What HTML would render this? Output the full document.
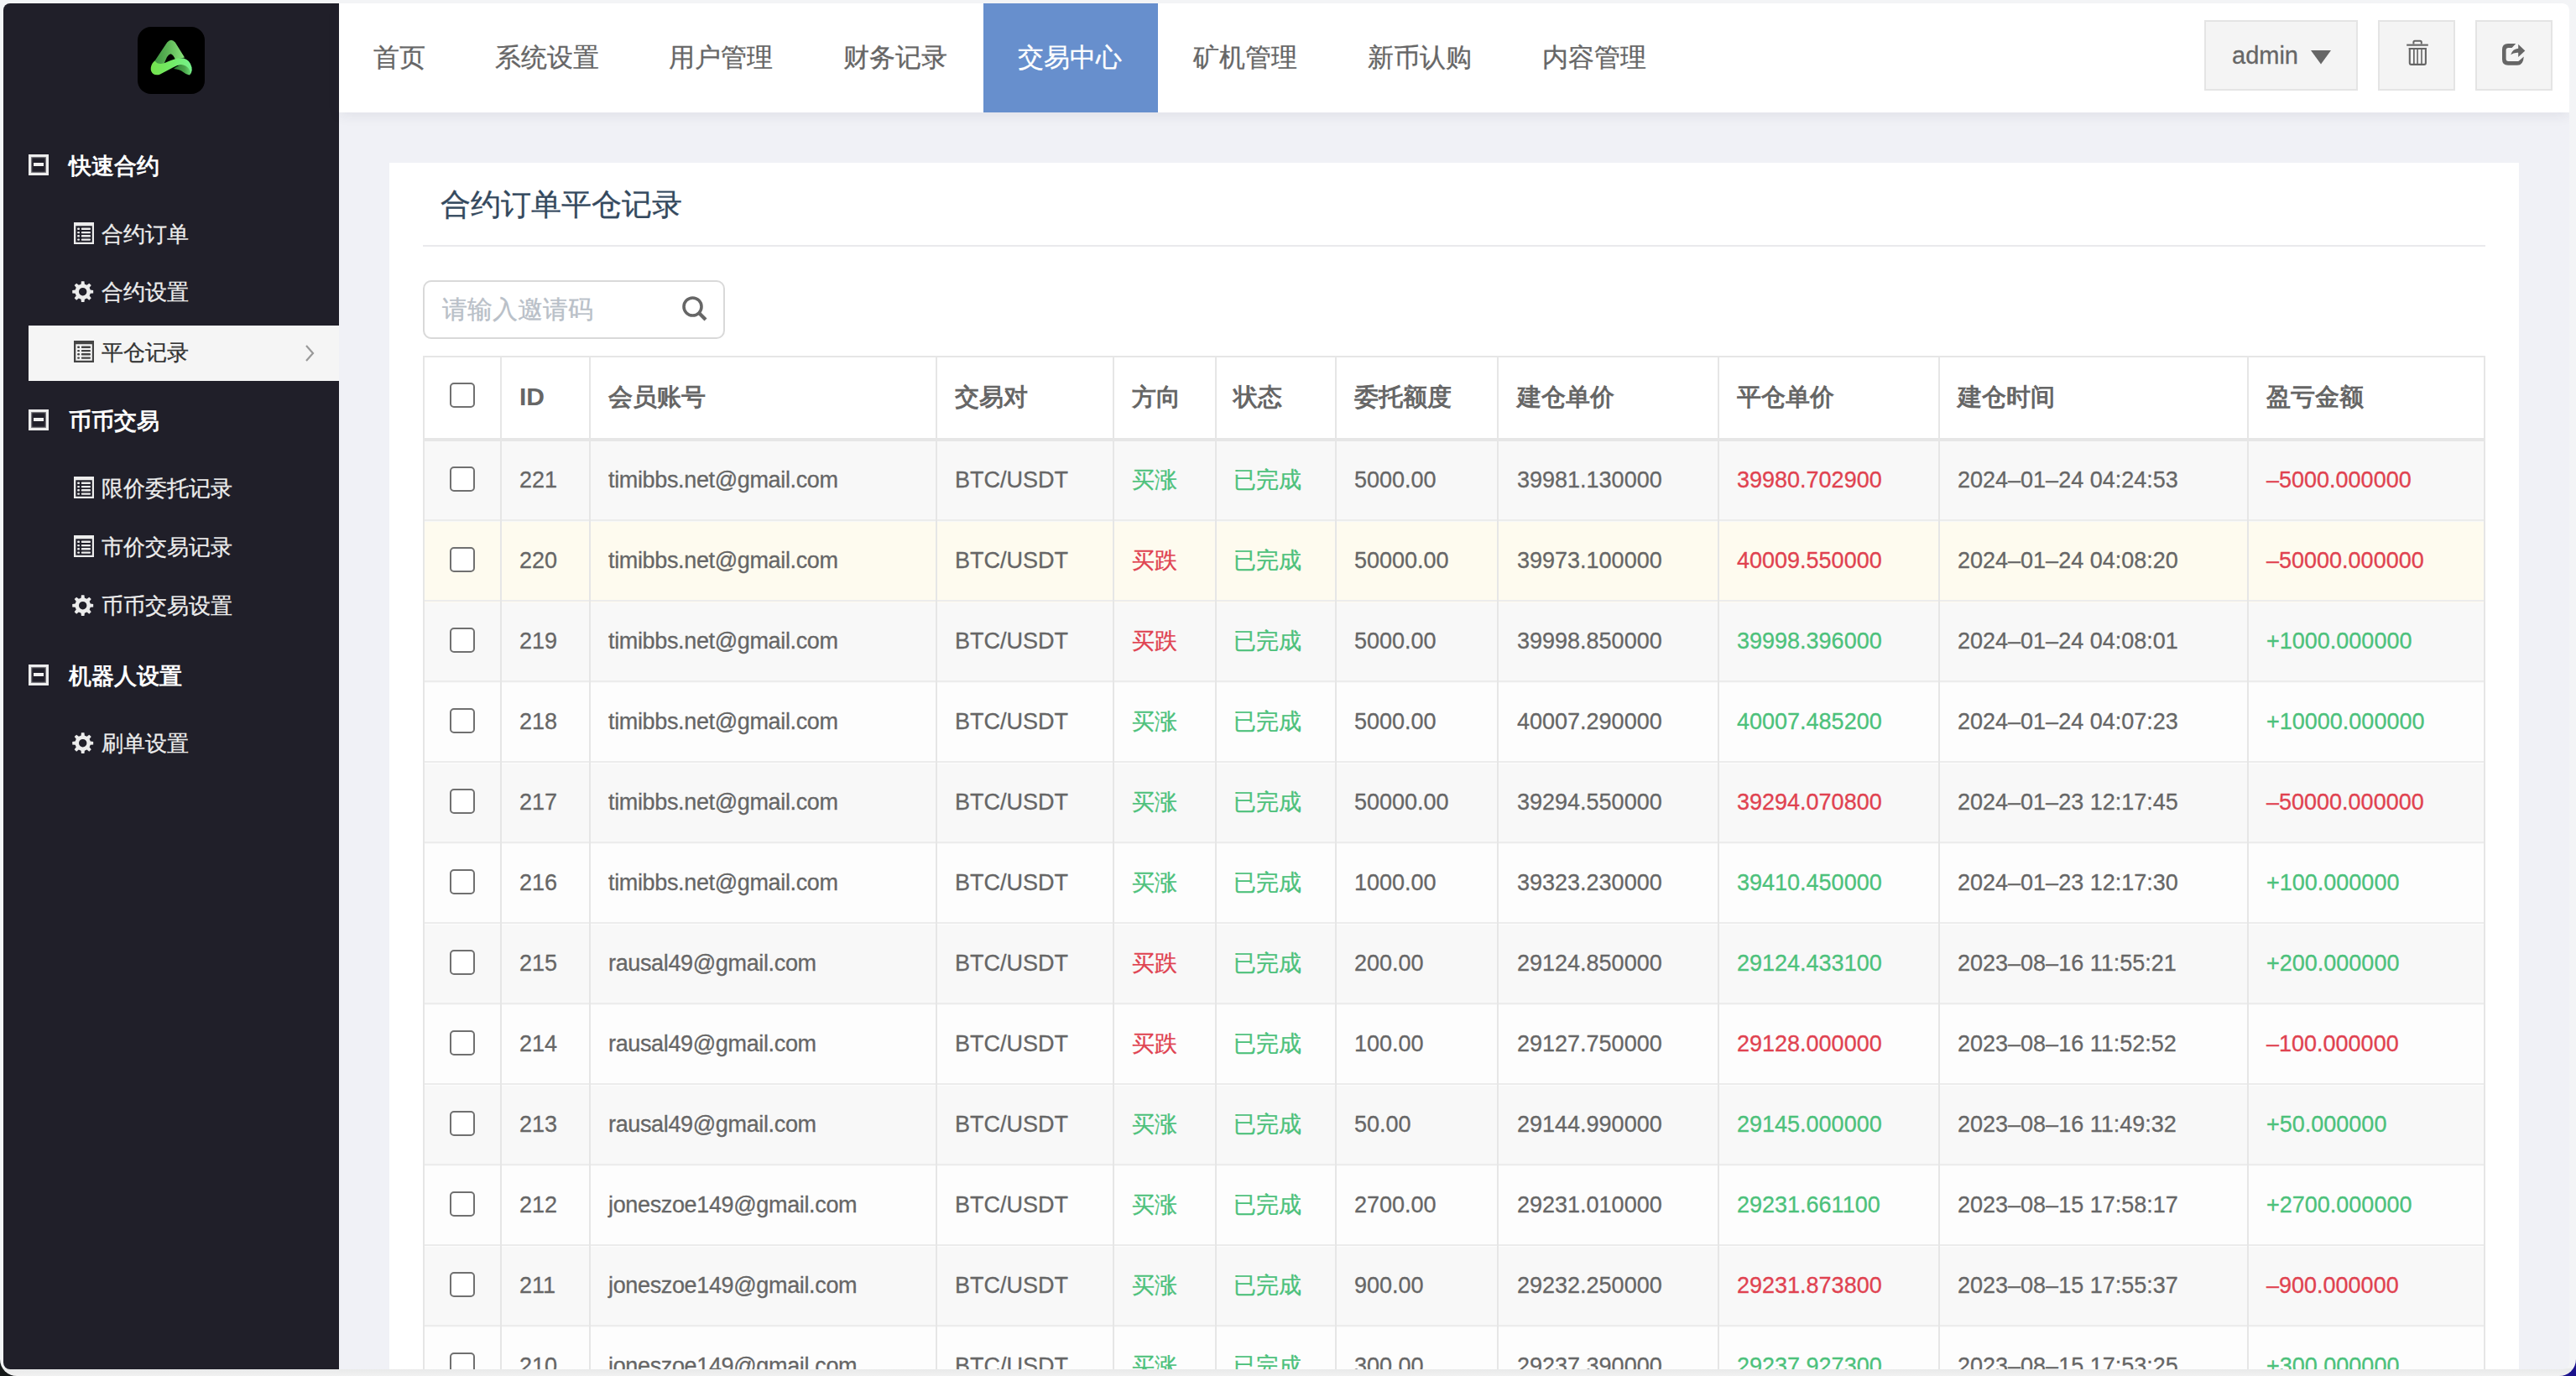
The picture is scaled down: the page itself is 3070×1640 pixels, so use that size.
<!DOCTYPE html><html><head><meta charset="utf-8"><title>平仓记录</title><style>
*{margin:0;padding:0;box-sizing:border-box}
html,body{width:3070px;height:1640px;overflow:hidden;background:linear-gradient(to right,#151919 50%,#1b128c 50%)}
body{font-family:"Liberation Sans",sans-serif;position:relative;-webkit-text-stroke:0.3px currentColor}
.abs{position:absolute}
#frame{position:absolute;left:0;top:0;width:3070px;height:1640px;background:linear-gradient(to bottom,#f3f4f6 0,#f3f4f6 1630px,#e9eaea 1632px,#f1f1f1 1640px);border-radius:0 0 20px 20px}
#win{position:absolute;left:4px;top:4px;width:3058px;height:1628px;border-radius:8px;overflow:hidden;background:#f0f1f6}
#side{position:absolute;left:0;top:0;width:400px;height:1628px;background:#201f29}
#logo{position:absolute;left:160px;top:28px;width:80px;height:80px;border-radius:16px;background:#000}
.sh{position:absolute;left:77.5px;font-size:26.6px;font-weight:bold;color:#fff;line-height:40px;height:40px;white-space:nowrap;-webkit-text-stroke:0}
.shi{position:absolute;left:30px;width:24px;height:24.5px;border:3px solid #ededed;box-shadow:inset 0 0 1.5px 1px rgba(235,235,235,.55)}
.shi:after{content:"";position:absolute;left:3px;top:7px;width:12px;height:4px;background:#f0f0f0}
.si{position:absolute;left:117px;font-size:26px;color:#ececec;line-height:40px;height:40px;white-space:nowrap}
.act{position:absolute;left:30px;top:384px;width:370px;height:66px;background:#f5f5f5}
#nav{position:absolute;left:400px;top:0;width:2658px;height:130px;background:#fff;box-shadow:0 4px 14px rgba(40,40,70,.075)}
.tab{position:absolute;top:0;height:130px;line-height:130px;font-size:31px;color:#666;white-space:nowrap}
#acttab{position:absolute;left:768px;top:0;width:208px;height:130px;background:#678fcd}
.btn{position:absolute;top:20px;height:84px;background:#f4f4f4;border:2px solid #e4e4e4}
#card{position:absolute;left:460px;top:190px;width:2538px;height:1500px;background:#fff}
.t{position:absolute;white-space:nowrap;font-size:27px;color:#666;line-height:40px;height:40px}
.h{position:absolute;white-space:nowrap;font-size:30px;font-weight:bold;color:#666;line-height:40px;height:40px;-webkit-text-stroke:0}
.vl{position:absolute;width:2px;background:#e6e6e6}
.hl{position:absolute;height:2px;background:#e6e6e6}
.cb{position:absolute;width:30px;height:30px;border:2px solid #707070;border-radius:5px;background:#fff}
.r{color:#e04250}.g{color:#4cc17b}
</style></head><body>
<div id="frame"></div>
<div id="win">
<div id="side">
<div id="logo"><svg width="80" height="80" viewBox="0 0 80 80"><defs><linearGradient id="g1" x1="20" y1="0" x2="56" y2="0" gradientUnits="userSpaceOnUse"><stop offset="0" stop-color="#3d9440"/><stop offset=".45" stop-color="#5cb556"/><stop offset="1" stop-color="#8ae47c"/></linearGradient><linearGradient id="g2" x1="15" y1="0" x2="65" y2="0" gradientUnits="userSpaceOnUse"><stop offset="0" stop-color="#74e24c"/><stop offset=".5" stop-color="#72ea66"/><stop offset="1" stop-color="#76f28c"/></linearGradient><linearGradient id="g3" x1="44" y1="0" x2="64" y2="0" gradientUnits="userSpaceOnUse"><stop offset="0" stop-color="#2e7f34"/><stop offset=".6" stop-color="#4aa64a"/><stop offset="1" stop-color="#6fdc78"/></linearGradient></defs><path d="M19.5 42 L35.2 18.6 Q40 12.8 44.8 18.6 L56 36.6 L45 39 Q42.5 33 40 32.4 Q37.5 32 35 36 L30.5 46 L24 46 Z" fill="url(#g1)"/><path d="M43 50 Q50 44.5 56 45.2 Q62 46.5 64.4 50.5 Q64.6 56 61.5 57.6 Q58 57 54 53.8 Q50 50.5 43 50 Z" fill="url(#g3)"/><path d="M20.5 40.5 Q23 44 27.5 44 Q31 44 37 41 Q48 36 55 37.6 Q62.5 39.5 64.6 48.5 Q65 52 63.5 55.5 Q61.5 47.5 54.5 45.6 Q49 44.5 42 48.6 Q33 53.5 27 56.4 Q22 58.3 18.5 56 Q15.2 53 15.8 48.5 Q16.8 43 20.5 40.5 Z" fill="url(#g2)"/></svg></div>
<div class="shi" style="top:180px"></div>
<div class="sh" style="top:174px">快速合约</div>
<svg width="24" height="26" viewBox="0 0 24 26" class="abs" style="left:84px;top:261px"><path fill="#ececec" fill-rule="evenodd" d="M0 0H24V26H0Z M2.3 4.2V23.7H21.8V4.2Z"/><g fill="#ececec"><rect x="4.1" y="6.6" width="2.9" height="2.4" rx="1"/><rect x="8.8" y="6.6" width="11.2" height="2.4" rx="1"/><rect x="4.1" y="10.9" width="2.9" height="2.4" rx="1"/><rect x="8.8" y="10.9" width="11.2" height="2.4" rx="1"/><rect x="4.1" y="15.1" width="2.9" height="2.4" rx="1"/><rect x="8.8" y="15.1" width="11.2" height="2.4" rx="1"/><rect x="4.1" y="19.4" width="2.9" height="2.4" rx="1"/><rect x="8.8" y="19.4" width="11.2" height="2.4" rx="1"/></g></svg>
<div class="si" style="top:255px;">合约订单</div>
<svg width="25.4" height="25.4" viewBox="0 0 25.4 25.4" class="abs" style="left:82.3px;top:331.1px"><path fill="#ececec" fill-rule="evenodd" d="M10.53 3.66L10.95 0.22L14.45 0.22L14.87 3.66L17.56 4.77L20.28 2.64L22.76 5.12L20.63 7.84L21.74 10.53L25.18 10.95L25.18 14.45L21.74 14.87L20.63 17.56L22.76 20.28L20.28 22.76L17.56 20.63L14.87 21.74L14.45 25.18L10.95 25.18L10.53 21.74L7.84 20.63L5.12 22.76L2.64 20.28L4.77 17.56L3.66 14.87L0.22 14.45L0.22 10.95L3.66 10.53L4.77 7.84L2.64 5.12L5.12 2.64L7.84 4.77ZM8.0 12.70a4.7 4.7 0 1 0 9.4 0a4.7 4.7 0 1 0 -9.4 0Z"/></svg>
<div class="si" style="top:324px;">合约设置</div>
<div class="act"></div>
<svg width="24" height="26" viewBox="0 0 24 26" class="abs" style="left:84px;top:402px"><path fill="#444" fill-rule="evenodd" d="M0 0H24V26H0Z M2.3 4.2V23.7H21.8V4.2Z"/><g fill="#444"><rect x="4.1" y="6.6" width="2.9" height="2.4" rx="1"/><rect x="8.8" y="6.6" width="11.2" height="2.4" rx="1"/><rect x="4.1" y="10.9" width="2.9" height="2.4" rx="1"/><rect x="8.8" y="10.9" width="11.2" height="2.4" rx="1"/><rect x="4.1" y="15.1" width="2.9" height="2.4" rx="1"/><rect x="8.8" y="15.1" width="11.2" height="2.4" rx="1"/><rect x="4.1" y="19.4" width="2.9" height="2.4" rx="1"/><rect x="8.8" y="19.4" width="11.2" height="2.4" rx="1"/></g></svg>
<div class="si" style="top:396px;color:#333">平仓记录</div>
<svg class="abs" style="left:358px;top:406px" width="14" height="22" viewBox="0 0 14 22"><path d="M3 2 L11 11 L3 20" fill="none" stroke="#999" stroke-width="2.2"/></svg>
<div class="shi" style="top:484px"></div>
<div class="sh" style="top:478px">币币交易</div>
<svg width="24" height="26" viewBox="0 0 24 26" class="abs" style="left:84px;top:564px"><path fill="#ececec" fill-rule="evenodd" d="M0 0H24V26H0Z M2.3 4.2V23.7H21.8V4.2Z"/><g fill="#ececec"><rect x="4.1" y="6.6" width="2.9" height="2.4" rx="1"/><rect x="8.8" y="6.6" width="11.2" height="2.4" rx="1"/><rect x="4.1" y="10.9" width="2.9" height="2.4" rx="1"/><rect x="8.8" y="10.9" width="11.2" height="2.4" rx="1"/><rect x="4.1" y="15.1" width="2.9" height="2.4" rx="1"/><rect x="8.8" y="15.1" width="11.2" height="2.4" rx="1"/><rect x="4.1" y="19.4" width="2.9" height="2.4" rx="1"/><rect x="8.8" y="19.4" width="11.2" height="2.4" rx="1"/></g></svg>
<div class="si" style="top:558px;">限价委托记录</div>
<svg width="24" height="26" viewBox="0 0 24 26" class="abs" style="left:84px;top:634px"><path fill="#ececec" fill-rule="evenodd" d="M0 0H24V26H0Z M2.3 4.2V23.7H21.8V4.2Z"/><g fill="#ececec"><rect x="4.1" y="6.6" width="2.9" height="2.4" rx="1"/><rect x="8.8" y="6.6" width="11.2" height="2.4" rx="1"/><rect x="4.1" y="10.9" width="2.9" height="2.4" rx="1"/><rect x="8.8" y="10.9" width="11.2" height="2.4" rx="1"/><rect x="4.1" y="15.1" width="2.9" height="2.4" rx="1"/><rect x="8.8" y="15.1" width="11.2" height="2.4" rx="1"/><rect x="4.1" y="19.4" width="2.9" height="2.4" rx="1"/><rect x="8.8" y="19.4" width="11.2" height="2.4" rx="1"/></g></svg>
<div class="si" style="top:628px;">市价交易记录</div>
<svg width="25.4" height="25.4" viewBox="0 0 25.4 25.4" class="abs" style="left:82.3px;top:705.1px"><path fill="#ececec" fill-rule="evenodd" d="M10.53 3.66L10.95 0.22L14.45 0.22L14.87 3.66L17.56 4.77L20.28 2.64L22.76 5.12L20.63 7.84L21.74 10.53L25.18 10.95L25.18 14.45L21.74 14.87L20.63 17.56L22.76 20.28L20.28 22.76L17.56 20.63L14.87 21.74L14.45 25.18L10.95 25.18L10.53 21.74L7.84 20.63L5.12 22.76L2.64 20.28L4.77 17.56L3.66 14.87L0.22 14.45L0.22 10.95L3.66 10.53L4.77 7.84L2.64 5.12L5.12 2.64L7.84 4.77ZM8.0 12.70a4.7 4.7 0 1 0 9.4 0a4.7 4.7 0 1 0 -9.4 0Z"/></svg>
<div class="si" style="top:698px;">币币交易设置</div>
<div class="shi" style="top:788px"></div>
<div class="sh" style="top:782px">机器人设置</div>
<svg width="25.4" height="25.4" viewBox="0 0 25.4 25.4" class="abs" style="left:82.3px;top:869.1px"><path fill="#ececec" fill-rule="evenodd" d="M10.53 3.66L10.95 0.22L14.45 0.22L14.87 3.66L17.56 4.77L20.28 2.64L22.76 5.12L20.63 7.84L21.74 10.53L25.18 10.95L25.18 14.45L21.74 14.87L20.63 17.56L22.76 20.28L20.28 22.76L17.56 20.63L14.87 21.74L14.45 25.18L10.95 25.18L10.53 21.74L7.84 20.63L5.12 22.76L2.64 20.28L4.77 17.56L3.66 14.87L0.22 14.45L0.22 10.95L3.66 10.53L4.77 7.84L2.64 5.12L5.12 2.64L7.84 4.77ZM8.0 12.70a4.7 4.7 0 1 0 9.4 0a4.7 4.7 0 1 0 -9.4 0Z"/></svg>
<div class="si" style="top:862px;">刷单设置</div>
</div>
<div id="nav">
<div id="acttab"></div>
<div class="tab" style="left:41px;">首页</div>
<div class="tab" style="left:186px;">系统设置</div>
<div class="tab" style="left:393px;">用户管理</div>
<div class="tab" style="left:601px;">财务记录</div>
<div class="tab" style="left:809px;color:#fff;">交易中心</div>
<div class="tab" style="left:1018px;">矿机管理</div>
<div class="tab" style="left:1226px;">新币认购</div>
<div class="tab" style="left:1434px;">内容管理</div>
<div class="btn" style="left:2223px;width:183px"></div>
<div class="abs" style="left:2256px;top:20px;height:84px;line-height:84px;font-size:29px;color:#666">admin</div>
<svg class="abs" style="left:2350px;top:56px" width="24" height="17" viewBox="0 0 24 17"><path d="M0 0 H24 L12 16.5 Z" fill="#666"/></svg>
<div class="btn" style="left:2430px;width:92px"></div>
<svg class="abs" style="left:2464px;top:43px" width="26" height="32" viewBox="0 0 26 32"><rect x="0.2" y="5.6" width="25.6" height="2.1" fill="#666"/><path d="M8.4 5.6 V3.2 Q8.4 1.7 9.9 1.7 H16.3 Q17.8 1.7 17.8 3.2 V5.6" fill="none" stroke="#666" stroke-width="2"/><path d="M3.8 10 V28 Q3.8 29.9 5.7 29.9 H20.9 Q22.9 29.9 22.9 28 V10" fill="none" stroke="#666" stroke-width="2.1"/><rect x="2.8" y="10" width="21.1" height="2" fill="#666"/><rect x="8" y="10" width="1.7" height="20" fill="#666"/><rect x="12.3" y="10" width="1.6" height="20" fill="#666"/><rect x="17.2" y="10" width="1.6" height="20" fill="#666"/></svg>
<div class="btn" style="left:2546px;width:92px"></div>
<svg class="abs" style="left:2576px;top:46px" width="32" height="30" viewBox="0 0 32 30"><path fill="#666" d="M18.3 2 L9 2 Q2 2 2 9 L2 20.8 Q2 27.8 9 27.8 L20 27.8 Q27.2 27.8 27.8 17.4 L22 22.4 Q21.4 22.9 20 22.9 L9.5 22.9 Q6.6 22.9 6.6 20 L6.6 9.8 Q6.6 6.9 9.5 6.9 L13.6 6.9 Z"/><path fill="#666" d="M21.2 2.8 L29.3 10.4 L21.2 18 L21.2 12.7 Q15.5 12.4 12.2 15.2 Q14.6 8.3 21.2 7.8 Z"/></svg>
</div>
<div id="card"></div>
<div class="abs" style="left:521px;top:216px;font-size:36px;color:#34495e;line-height:48px;white-space:nowrap">合约订单平仓记录</div>
<div class="hl" style="left:500px;top:288px;width:2458px;background:#e9e9ec"></div>
<div class="abs" style="left:500px;top:330px;width:360px;height:70px;border:2px solid #d9d9d9;border-radius:10px;background:#fff"></div>
<div class="abs" style="left:523px;top:345px;font-size:30px;color:#b9c0c8;line-height:40px;white-space:nowrap">请输入邀请码</div>
<svg class="abs" style="left:808px;top:348px" width="32" height="33" viewBox="0 0 32 33"><circle cx="13.5" cy="13.5" r="10.5" fill="none" stroke="#666" stroke-width="3.6"/><path d="M21 21 L29 29" stroke="#666" stroke-width="4.2" stroke-linecap="butt"/></svg>
<div class="abs" style="left:500px;top:420px;width:2458px;height:98px;background:#fff"></div>
<div class="abs" style="left:500px;top:522px;width:2458px;height:96px;background:#f8f8f8"></div>
<div class="abs" style="left:500px;top:618px;width:2458px;height:96px;background:#fefbef"></div>
<div class="abs" style="left:500px;top:714px;width:2458px;height:96px;background:#f8f8f8"></div>
<div class="abs" style="left:500px;top:810px;width:2458px;height:96px;background:#fdfdfd"></div>
<div class="abs" style="left:500px;top:906px;width:2458px;height:96px;background:#f8f8f8"></div>
<div class="abs" style="left:500px;top:1002px;width:2458px;height:96px;background:#fdfdfd"></div>
<div class="abs" style="left:500px;top:1098px;width:2458px;height:96px;background:#f8f8f8"></div>
<div class="abs" style="left:500px;top:1194px;width:2458px;height:96px;background:#fdfdfd"></div>
<div class="abs" style="left:500px;top:1290px;width:2458px;height:96px;background:#f8f8f8"></div>
<div class="abs" style="left:500px;top:1386px;width:2458px;height:96px;background:#fdfdfd"></div>
<div class="abs" style="left:500px;top:1482px;width:2458px;height:96px;background:#f8f8f8"></div>
<div class="abs" style="left:500px;top:1578px;width:2458px;height:96px;background:#fdfdfd"></div>
<div class="hl" style="left:500px;top:420px;width:2458px"></div>
<div class="hl" style="left:500px;top:518px;width:2458px;height:4px"></div>
<div class="hl" style="left:500px;top:615px;width:2458px;background:#ececec"></div>
<div class="hl" style="left:500px;top:711px;width:2458px;background:#ececec"></div>
<div class="hl" style="left:500px;top:807px;width:2458px;background:#ececec"></div>
<div class="hl" style="left:500px;top:903px;width:2458px;background:#ececec"></div>
<div class="hl" style="left:500px;top:999px;width:2458px;background:#ececec"></div>
<div class="hl" style="left:500px;top:1095px;width:2458px;background:#ececec"></div>
<div class="hl" style="left:500px;top:1191px;width:2458px;background:#ececec"></div>
<div class="hl" style="left:500px;top:1287px;width:2458px;background:#ececec"></div>
<div class="hl" style="left:500px;top:1383px;width:2458px;background:#ececec"></div>
<div class="hl" style="left:500px;top:1479px;width:2458px;background:#ececec"></div>
<div class="hl" style="left:500px;top:1575px;width:2458px;background:#ececec"></div>
<div class="hl" style="left:500px;top:1671px;width:2458px;background:#ececec"></div>
<div class="vl" style="left:500px;top:420px;height:1254px"></div>
<div class="vl" style="left:592px;top:420px;height:1254px"></div>
<div class="vl" style="left:698px;top:420px;height:1254px"></div>
<div class="vl" style="left:1111px;top:420px;height:1254px"></div>
<div class="vl" style="left:1322px;top:420px;height:1254px"></div>
<div class="vl" style="left:1444px;top:420px;height:1254px"></div>
<div class="vl" style="left:1587px;top:420px;height:1254px"></div>
<div class="vl" style="left:1780px;top:420px;height:1254px"></div>
<div class="vl" style="left:2043px;top:420px;height:1254px"></div>
<div class="vl" style="left:2306px;top:420px;height:1254px"></div>
<div class="vl" style="left:2674px;top:420px;height:1254px"></div>
<div class="vl" style="left:2956px;top:420px;height:1254px"></div>
<div class="cb" style="left:532px;top:452px"></div>
<div class="h" style="left:615px;top:449px;">ID</div>
<div class="h" style="left:721px;top:449px;font-size:29px;">会员账号</div>
<div class="h" style="left:1134px;top:449px;font-size:29px;">交易对</div>
<div class="h" style="left:1345px;top:449px;font-size:29px;">方向</div>
<div class="h" style="left:1466px;top:449px;font-size:29px;">状态</div>
<div class="h" style="left:1610px;top:449px;font-size:29px;">委托额度</div>
<div class="h" style="left:1804px;top:449px;font-size:29px;">建仓单价</div>
<div class="h" style="left:2066px;top:449px;font-size:29px;">平仓单价</div>
<div class="h" style="left:2329px;top:449px;font-size:29px;">建仓时间</div>
<div class="h" style="left:2697px;top:449px;font-size:29px;">盈亏金额</div>
<div class="cb" style="left:532px;top:552px"></div>
<div class="t" style="left:615px;top:548px">221</div>
<div class="t" style="left:721px;top:548px"><span style="letter-spacing:-0.35px">timibbs.net@gmail.com</span></div>
<div class="t" style="left:1134px;top:548px">BTC/USDT</div>
<div class="t" style="left:1345px;top:548px"><span class="g">买涨</span></div>
<div class="t" style="left:1466px;top:548px"><span class="g">已完成</span></div>
<div class="t" style="left:1610px;top:548px">5000.00</div>
<div class="t" style="left:1804px;top:548px">39981.130000</div>
<div class="t" style="left:2066px;top:548px"><span class="r">39980.702900</span></div>
<div class="t" style="left:2329px;top:548px">2024&#8211;01&#8211;24 04:24:53</div>
<div class="t" style="left:2697px;top:548px"><span class="r">&#8211;5000.000000</span></div>
<div class="cb" style="left:532px;top:648px"></div>
<div class="t" style="left:615px;top:644px">220</div>
<div class="t" style="left:721px;top:644px"><span style="letter-spacing:-0.35px">timibbs.net@gmail.com</span></div>
<div class="t" style="left:1134px;top:644px">BTC/USDT</div>
<div class="t" style="left:1345px;top:644px"><span class="r">买跌</span></div>
<div class="t" style="left:1466px;top:644px"><span class="g">已完成</span></div>
<div class="t" style="left:1610px;top:644px">50000.00</div>
<div class="t" style="left:1804px;top:644px">39973.100000</div>
<div class="t" style="left:2066px;top:644px"><span class="r">40009.550000</span></div>
<div class="t" style="left:2329px;top:644px">2024&#8211;01&#8211;24 04:08:20</div>
<div class="t" style="left:2697px;top:644px"><span class="r">&#8211;50000.000000</span></div>
<div class="cb" style="left:532px;top:744px"></div>
<div class="t" style="left:615px;top:740px">219</div>
<div class="t" style="left:721px;top:740px"><span style="letter-spacing:-0.35px">timibbs.net@gmail.com</span></div>
<div class="t" style="left:1134px;top:740px">BTC/USDT</div>
<div class="t" style="left:1345px;top:740px"><span class="r">买跌</span></div>
<div class="t" style="left:1466px;top:740px"><span class="g">已完成</span></div>
<div class="t" style="left:1610px;top:740px">5000.00</div>
<div class="t" style="left:1804px;top:740px">39998.850000</div>
<div class="t" style="left:2066px;top:740px"><span class="g">39998.396000</span></div>
<div class="t" style="left:2329px;top:740px">2024&#8211;01&#8211;24 04:08:01</div>
<div class="t" style="left:2697px;top:740px"><span class="g">+1000.000000</span></div>
<div class="cb" style="left:532px;top:840px"></div>
<div class="t" style="left:615px;top:836px">218</div>
<div class="t" style="left:721px;top:836px"><span style="letter-spacing:-0.35px">timibbs.net@gmail.com</span></div>
<div class="t" style="left:1134px;top:836px">BTC/USDT</div>
<div class="t" style="left:1345px;top:836px"><span class="g">买涨</span></div>
<div class="t" style="left:1466px;top:836px"><span class="g">已完成</span></div>
<div class="t" style="left:1610px;top:836px">5000.00</div>
<div class="t" style="left:1804px;top:836px">40007.290000</div>
<div class="t" style="left:2066px;top:836px"><span class="g">40007.485200</span></div>
<div class="t" style="left:2329px;top:836px">2024&#8211;01&#8211;24 04:07:23</div>
<div class="t" style="left:2697px;top:836px"><span class="g">+10000.000000</span></div>
<div class="cb" style="left:532px;top:936px"></div>
<div class="t" style="left:615px;top:932px">217</div>
<div class="t" style="left:721px;top:932px"><span style="letter-spacing:-0.35px">timibbs.net@gmail.com</span></div>
<div class="t" style="left:1134px;top:932px">BTC/USDT</div>
<div class="t" style="left:1345px;top:932px"><span class="g">买涨</span></div>
<div class="t" style="left:1466px;top:932px"><span class="g">已完成</span></div>
<div class="t" style="left:1610px;top:932px">50000.00</div>
<div class="t" style="left:1804px;top:932px">39294.550000</div>
<div class="t" style="left:2066px;top:932px"><span class="r">39294.070800</span></div>
<div class="t" style="left:2329px;top:932px">2024&#8211;01&#8211;23 12:17:45</div>
<div class="t" style="left:2697px;top:932px"><span class="r">&#8211;50000.000000</span></div>
<div class="cb" style="left:532px;top:1032px"></div>
<div class="t" style="left:615px;top:1028px">216</div>
<div class="t" style="left:721px;top:1028px"><span style="letter-spacing:-0.35px">timibbs.net@gmail.com</span></div>
<div class="t" style="left:1134px;top:1028px">BTC/USDT</div>
<div class="t" style="left:1345px;top:1028px"><span class="g">买涨</span></div>
<div class="t" style="left:1466px;top:1028px"><span class="g">已完成</span></div>
<div class="t" style="left:1610px;top:1028px">1000.00</div>
<div class="t" style="left:1804px;top:1028px">39323.230000</div>
<div class="t" style="left:2066px;top:1028px"><span class="g">39410.450000</span></div>
<div class="t" style="left:2329px;top:1028px">2024&#8211;01&#8211;23 12:17:30</div>
<div class="t" style="left:2697px;top:1028px"><span class="g">+100.000000</span></div>
<div class="cb" style="left:532px;top:1128px"></div>
<div class="t" style="left:615px;top:1124px">215</div>
<div class="t" style="left:721px;top:1124px"><span style="letter-spacing:-0.35px">rausal49@gmail.com</span></div>
<div class="t" style="left:1134px;top:1124px">BTC/USDT</div>
<div class="t" style="left:1345px;top:1124px"><span class="r">买跌</span></div>
<div class="t" style="left:1466px;top:1124px"><span class="g">已完成</span></div>
<div class="t" style="left:1610px;top:1124px">200.00</div>
<div class="t" style="left:1804px;top:1124px">29124.850000</div>
<div class="t" style="left:2066px;top:1124px"><span class="g">29124.433100</span></div>
<div class="t" style="left:2329px;top:1124px">2023&#8211;08&#8211;16 11:55:21</div>
<div class="t" style="left:2697px;top:1124px"><span class="g">+200.000000</span></div>
<div class="cb" style="left:532px;top:1224px"></div>
<div class="t" style="left:615px;top:1220px">214</div>
<div class="t" style="left:721px;top:1220px"><span style="letter-spacing:-0.35px">rausal49@gmail.com</span></div>
<div class="t" style="left:1134px;top:1220px">BTC/USDT</div>
<div class="t" style="left:1345px;top:1220px"><span class="r">买跌</span></div>
<div class="t" style="left:1466px;top:1220px"><span class="g">已完成</span></div>
<div class="t" style="left:1610px;top:1220px">100.00</div>
<div class="t" style="left:1804px;top:1220px">29127.750000</div>
<div class="t" style="left:2066px;top:1220px"><span class="r">29128.000000</span></div>
<div class="t" style="left:2329px;top:1220px">2023&#8211;08&#8211;16 11:52:52</div>
<div class="t" style="left:2697px;top:1220px"><span class="r">&#8211;100.000000</span></div>
<div class="cb" style="left:532px;top:1320px"></div>
<div class="t" style="left:615px;top:1316px">213</div>
<div class="t" style="left:721px;top:1316px"><span style="letter-spacing:-0.35px">rausal49@gmail.com</span></div>
<div class="t" style="left:1134px;top:1316px">BTC/USDT</div>
<div class="t" style="left:1345px;top:1316px"><span class="g">买涨</span></div>
<div class="t" style="left:1466px;top:1316px"><span class="g">已完成</span></div>
<div class="t" style="left:1610px;top:1316px">50.00</div>
<div class="t" style="left:1804px;top:1316px">29144.990000</div>
<div class="t" style="left:2066px;top:1316px"><span class="g">29145.000000</span></div>
<div class="t" style="left:2329px;top:1316px">2023&#8211;08&#8211;16 11:49:32</div>
<div class="t" style="left:2697px;top:1316px"><span class="g">+50.000000</span></div>
<div class="cb" style="left:532px;top:1416px"></div>
<div class="t" style="left:615px;top:1412px">212</div>
<div class="t" style="left:721px;top:1412px"><span style="letter-spacing:-0.35px">joneszoe149@gmail.com</span></div>
<div class="t" style="left:1134px;top:1412px">BTC/USDT</div>
<div class="t" style="left:1345px;top:1412px"><span class="g">买涨</span></div>
<div class="t" style="left:1466px;top:1412px"><span class="g">已完成</span></div>
<div class="t" style="left:1610px;top:1412px">2700.00</div>
<div class="t" style="left:1804px;top:1412px">29231.010000</div>
<div class="t" style="left:2066px;top:1412px"><span class="g">29231.661100</span></div>
<div class="t" style="left:2329px;top:1412px">2023&#8211;08&#8211;15 17:58:17</div>
<div class="t" style="left:2697px;top:1412px"><span class="g">+2700.000000</span></div>
<div class="cb" style="left:532px;top:1512px"></div>
<div class="t" style="left:615px;top:1508px">211</div>
<div class="t" style="left:721px;top:1508px"><span style="letter-spacing:-0.35px">joneszoe149@gmail.com</span></div>
<div class="t" style="left:1134px;top:1508px">BTC/USDT</div>
<div class="t" style="left:1345px;top:1508px"><span class="g">买涨</span></div>
<div class="t" style="left:1466px;top:1508px"><span class="g">已完成</span></div>
<div class="t" style="left:1610px;top:1508px">900.00</div>
<div class="t" style="left:1804px;top:1508px">29232.250000</div>
<div class="t" style="left:2066px;top:1508px"><span class="r">29231.873800</span></div>
<div class="t" style="left:2329px;top:1508px">2023&#8211;08&#8211;15 17:55:37</div>
<div class="t" style="left:2697px;top:1508px"><span class="r">&#8211;900.000000</span></div>
<div class="cb" style="left:532px;top:1608px"></div>
<div class="t" style="left:615px;top:1604px">210</div>
<div class="t" style="left:721px;top:1604px"><span style="letter-spacing:-0.35px">joneszoe149@gmail.com</span></div>
<div class="t" style="left:1134px;top:1604px">BTC/USDT</div>
<div class="t" style="left:1345px;top:1604px"><span class="g">买涨</span></div>
<div class="t" style="left:1466px;top:1604px"><span class="g">已完成</span></div>
<div class="t" style="left:1610px;top:1604px">300.00</div>
<div class="t" style="left:1804px;top:1604px">29237.390000</div>
<div class="t" style="left:2066px;top:1604px"><span class="g">29237.927300</span></div>
<div class="t" style="left:2329px;top:1604px">2023&#8211;08&#8211;15 17:53:25</div>
<div class="t" style="left:2697px;top:1604px"><span class="g">+300.000000</span></div>
</div>
</body></html>
